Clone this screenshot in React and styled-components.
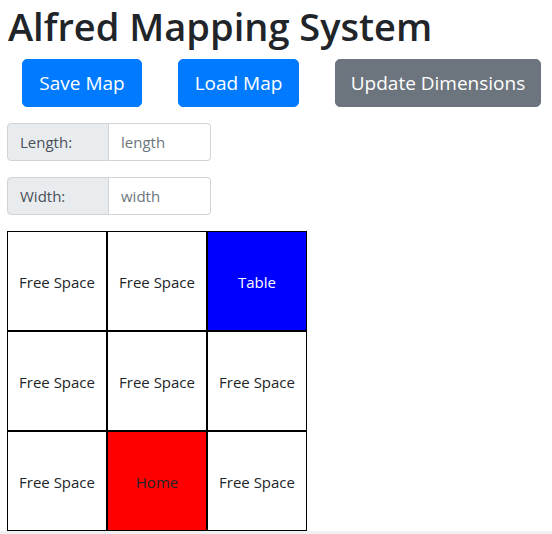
import styled, { createGlobalStyle } from "styled-components";

const GlobalStyle = createGlobalStyle`
  body {
    margin: 0;
    background-color: white;
    font-family: "Open Sans", "Noto Sans", sans-serif;
    color: #212529;
  }
  * {
    box-sizing: border-box;
  }
`;

const cells = [
  ["Free Space", "Free Space", "Table"],
  ["Free Space", "Free Space", "Free Space"],
  ["Free Space", "Home", "Free Space"],
];

const App = () => {
  return (
    <>
      <GlobalStyle />
      <Page>
        <Title>Alfred Mapping System</Title>
        <ButtonRow>
          <Button variant="primary" width={120}>
            Save Map
          </Button>
          <Button variant="primary" width={121}>
            Load Map
          </Button>
          <Button variant="secondary" width={206}>
            Update Dimensions
          </Button>
        </ButtonRow>
        <InputGroup>
          <GroupLabel>Length:</GroupLabel>
          <GroupInput placeholder="length" />
        </InputGroup>
        <InputGroup>
          <GroupLabel>Width:</GroupLabel>
          <GroupInput placeholder="width" />
        </InputGroup>
        <MapGrid>
          {cells.flat().map((kind, i) => (
            <Cell key={i} kind={kind}>
              {kind}
            </Cell>
          ))}
        </MapGrid>
      </Page>
      <Footer />
    </>
  );
};

const Page = styled.div`
  padding: 0 7px;
`;

const Title = styled.h1`
  margin: 0 0 9px 1px;
  padding-top: 2px;
  font-size: 38px;
  font-weight: 600;
  line-height: 48px;
  color: #212529;
`;

const ButtonRow = styled.div`
  display: flex;
  gap: 36px;
  padding-left: 15px;
  margin-bottom: 16px;
`;

const Button = styled.button`
  width: ${(p) => p.width}px;
  height: 48px;
  padding: 0;
  border: 1px solid
    ${(p) => (p.variant === "primary" ? "#007bff" : "#6c757d")};
  border-radius: 5px;
  background-color: ${(p) => (p.variant === "primary" ? "#007bff" : "#6c757d")};
  color: white;
  font-family: "Open Sans", "Noto Sans", sans-serif;
  font-size: 19px;
  line-height: 1.5;
  cursor: pointer;
`;

const InputGroup = styled.div`
  display: flex;
  width: 204px;
  height: 38px;
  margin-bottom: 16px;
`;

const GroupLabel = styled.span`
  display: flex;
  align-items: center;
  width: 102px;
  padding: 0 12px;
  background-color: #e9ecef;
  border: 1px solid #ced4da;
  border-radius: 4px 0 0 4px;
  color: #495057;
  font-size: 15px;
`;

const GroupInput = styled.input`
  width: 102px;
  padding: 0 12px;
  border: 1px solid #ced4da;
  border-left: none;
  border-radius: 0 4px 4px 0;
  font-family: "Open Sans", "Noto Sans", sans-serif;
  font-size: 15px;
  color: #495057;
  outline: none;
  &::placeholder {
    color: #6c757d;
  }
`;

const cellColors = {
  Table: { bg: "#0000ff", fg: "white" },
  Home: { bg: "#ff0000", fg: "#212529" },
};

const MapGrid = styled.div`
  display: grid;
  grid-template-columns: repeat(3, 100px);
  grid-auto-rows: 100px;
`;

const Cell = styled.div`
  display: flex;
  align-items: center;
  justify-content: center;
  padding-top: 2px;
  border: 1px solid black;
  background-color: ${(p) => cellColors[p.kind]?.bg || "white"};
  color: ${(p) => cellColors[p.kind]?.fg || "#212529"};
  font-size: 15px;
`;

const Footer = styled.div`
  height: 20px;
  background-color: #f0f0f0;
`;

export default App;
